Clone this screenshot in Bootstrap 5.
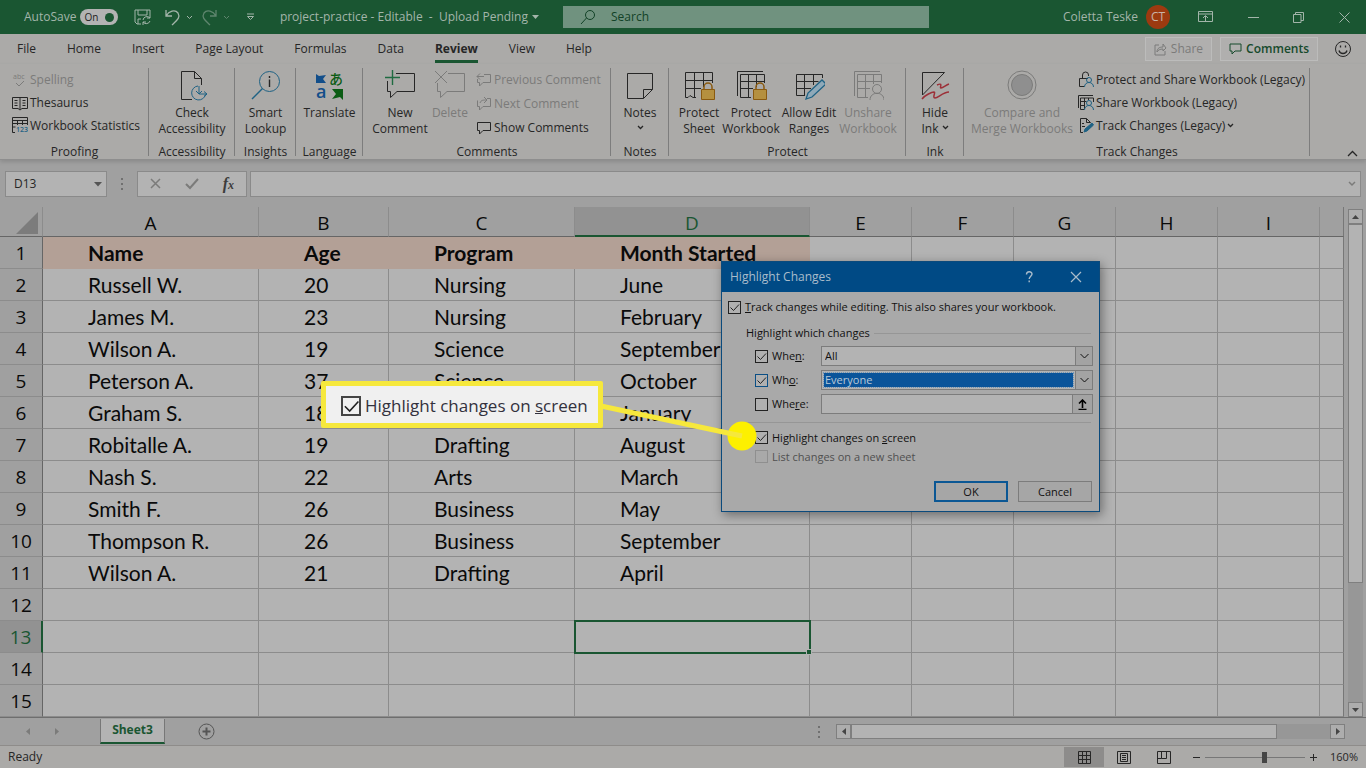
<!DOCTYPE html>
<html lang="en">
<head>
<meta charset="utf-8">
<meta name="viewport" content="width=device-width, initial-scale=1">
<title>project-practice - Excel</title>
<link href="https://cdn.jsdelivr.net/npm/bootstrap@5.3.0/dist/css/bootstrap.min.css" rel="stylesheet">
<style>
:root{--ink:#262626;--dim:#7b7b7a;--green:#1a5632;--ribbon:#abaaa8;--chrome:#a0a0a0;--paper:#b3b3b3;--line:#8c8c8c}
body{font-family:"Open Sans","Noto Sans",sans-serif;font-size:12px;line-height:16px;color:var(--ink);background:var(--chrome);min-height:100vh;overflow-x:hidden}
button,select,input{font:inherit;color:inherit}
button{border:0;background:none;padding:0}
svg{fill:none;flex:none;display:block}
svg:not([stroke]){stroke:currentColor}
.off{color:var(--dim)}
/* title bar */
.titlebar{height:34px;background:var(--green);color:#a3b5aa}
.title-left{flex:0 0 563px}
.title-right{flex:0 0 437px}
.autosave{width:38px;height:16px;border-radius:8px;background:#b3b3b3;color:#222;font-size:10px}
.autosave i{width:9px;height:9px;border-radius:50%;background:var(--green)}
.search{height:22px;background:#70927f;color:#124227}
.search input{border:0;background:none;outline:0;width:100%}
.search input::placeholder{color:#124227;opacity:1}
.avatar{width:24px;height:24px;background:#9c3a10;color:#c9b4a8}
.winbtns{width:192px}
/* menu tabs */
.menus{height:30px;background:var(--ribbon);padding:0 14px 0 17px}
.menus .tabs{gap:31px}
.menus a{color:var(--ink);text-decoration:none;line-height:22px;padding-top:3px;border-bottom:3px solid transparent}
.menus a.current{font-weight:700;border-color:var(--green)}
.pill{height:24px;border:1px solid #bcbcbb;background:#b0afae}
.pill.strong{color:#164a2c;font-weight:600}
/* ribbon */
.ribbon{height:96px;background:var(--ribbon);border-bottom:1px solid #8e8e8e;box-shadow:0 2px 4px #0002;position:relative}
.grp{position:relative;height:95px;padding-top:4px;flex:none}
.grp::after{content:"";position:absolute;right:0;top:4px;bottom:3px;border-right:1px solid #7d7d7d}
.grp .cap{height:16px}
.grp .tools{height:76px}
.big{display:flex;flex-direction:column;align-items:center;white-space:nowrap;flex:none;text-align:center;padding-top:1px}
.big svg{margin-bottom:4px}
.rowbtn{display:flex;align-items:center;gap:2px;height:23px;white-space:nowrap}
.tall .rowbtn{height:24px}
.indent9{padding-left:9px}.indent6{padding-left:6px}
.w52{width:52px}.w54{width:54px}.w56{width:56px}.w44{width:44px}.w64{width:64px}.w104{width:104px}
.g1{width:149px}.g2{width:86px}.g3{width:61px}.g4{width:67px}.g5{width:248px}.g6{width:58px}.g7{width:237px}.g8{width:346px}
/* formula bar */
.formula{height:47px;padding:11px 5px 10px}
.boxed{border:1px solid #8a8a8a;background:var(--paper);height:26px}
.namebox{width:102px}
.namebox input,.fxline input{border:0;background:none;outline:0;width:100%}
.fxline{margin-left:3px}
.fxbtns{width:110px}
.fx{font-family:"Liberation Serif",serif;font-size:16px;font-style:italic;font-weight:700;color:#3c3c3c}
.fx sub{font-size:12px;bottom:0}
/* sheet */
.cells{table-layout:fixed;border-collapse:separate;border-spacing:0;width:100%;font-family:Lato,"Open Sans",sans-serif;font-size:21px;line-height:24px;color:#0a0a0a}
.cells .c-num{width:43px}.cells .c-a{width:216px}.cells .c-b{width:130px}.cells .c-c{width:186px}.cells .c-d{width:235px}.cells .c-std{width:102px}
.cells td,.cells th{padding:0;height:32px;border-right:1px solid var(--line);border-bottom:1px solid var(--line);font-weight:400;white-space:nowrap}
.cells thead th{height:30px;background:var(--chrome);border-bottom-color:#666;text-align:center;padding-top:3px;font-family:"Open Sans",sans-serif;font-size:19px}
.cells tbody th{background:var(--chrome);text-align:center;border-right-color:#666;font-family:"Open Sans",sans-serif;font-size:19px}
.cells td{background:var(--paper);padding-left:45px}
.cells td:last-child,.cells th:last-child:not(:first-child){border-right-color:#777}
.cells .heads td:nth-child(-n+5){background:#b3a096;border-color:#b3a096;font-weight:700}
.cells thead th.on{background:#929292;color:var(--green);border-bottom:2px solid var(--green)}
.cells tbody th.on{background:#929292;color:var(--green);border-right:2px solid var(--green)}
.cells td.sel{position:relative;outline:2px solid var(--green);outline-offset:-1px}
.cells td.sel::after{content:"";position:absolute;right:-3px;bottom:-3px;width:6px;height:6px;background:var(--green);border:1px solid var(--paper);box-sizing:border-box}
.vbar{flex:0 0 22px;padding:2px 3px 0 4px}
.arrow{width:15px;height:15px;border:1px solid #7f7f7f;background:#adadad;display:flex;align-items:center;justify-content:center;flex:none}
.thumb{border:1px solid #7f7f7f;background:var(--paper)}
.trk{background:#979797}
/* bottom bars */
.sheetbar{height:28px;border-top:1px solid #6e6e6e}
.sheetbar .left{flex:0 0 836px}
.sheetbar .left .off{padding-left:26px;gap:24px;width:100px}
.sheetbar .trk .thumb{height:15px}
.sheetbar .arrow:last-child{margin-right:21px}
.sheettab{width:65px;height:25px;margin-right:33px;margin-top:-1px;background:#b3b3b3;border-bottom:2px solid var(--green);border-left:1px solid #777;border-right:1px solid #777;color:var(--green);font-weight:700;align-self:flex-start}
.status{height:23px;background:var(--ribbon);border-top:1px solid #8e8c8a}
.view{width:40px;height:20px;display:flex;align-items:center;justify-content:center}
.view.on{background:#8d8c8b}
.zoomer{appearance:none;width:100px;height:12px;background:linear-gradient(#777,#777) center/100% 1px no-repeat}
.zoomer::-webkit-slider-thumb{appearance:none;width:5px;height:11px;background:#454545}
.percent{font-size:11px;margin-left:12px}
/* dialog */
.dlg{position:absolute;left:721px;top:54px;width:379px;background:#a9a9a9;border:1px solid #0b4a7c;box-shadow:2px 3px 10px #0006;font-size:11px;color:#111}
.dlg header{height:30px;background:#004a85;color:#a9bccb;font-size:12px;padding:0 17px 0 8px}
.dlg .helpbtn{margin-right:36px}
.tick{appearance:none;width:13px;height:13px;border:1px solid #222;margin:0;flex:none;background:#b0b0b0 center/11px 11px no-repeat}
.tick:checked{background-image:url("data:image/svg+xml,%3Csvg xmlns='http://www.w3.org/2000/svg' viewBox='0 0 11 11'%3E%3Cpath d='M1.5 5.5l3 3 5.500-6' fill='none' stroke='%23222'/%3E%3C/svg%3E")}
.tick.hot{border-color:#0b4f85}
.tick:disabled{border-color:#8f8f8f;background-color:#a9a9a9}
.opt{display:flex;align-items:center;gap:4px}
.opt.first{height:30px;padding-left:6px}
.opt.short{height:19px;padding-left:1px}
.opt.short.faint{color:#505050}
.legendrow{height:22px}
.fields{padding:0 6px 0 9px}
.fieldrow{height:24px}
.fieldrow .opt{width:66px;flex:none}
.combo{height:20px;border:1px solid #7c7c7c;background:var(--paper);display:flex;flex:1;align-items:stretch}
.combo select,.combo input{appearance:none;border:0;background:none;flex:1;min-width:0;padding:0 3px;outline:0}
.combo .hotsel{background:#0a549a;color:#b9c9d8;margin:2px;padding:0 1px;line-height:14px;outline:1px dotted #6d94b8}
.combo .drop{width:17px;border-left:1px solid #7c7c7c;background:#a3a3a3;display:flex;align-items:center;justify-content:center}
.combo button.drop{width:20px}
.rule{border-top:1px solid #969696}
.rule.split{margin:6px 8px 5px 24px}
.dbtns{gap:10px;padding:15px 7px 9px 0}
.dbtn{width:74px;height:21px;border:1px solid #7c7c7c;background:#a6a6a6}
.dbtn.main{border:2px solid #0b5794}
/* callout */
.callout-box{position:absolute;left:321px;top:174px;width:282px;height:47px;border:5px solid #f6e83c;border-radius:2px;background:#f0f0f0;color:#33313d;font-size:17px;padding:2px 0 0 15px;white-space:nowrap}
.callout-box .tick{width:20px;height:20px;border:2px solid #444;background-color:#f0f0f0;background-size:17px 17px}
.pointer{position:absolute;left:596px;top:180px}
</style>
</head>
<body class="d-flex flex-column">

<header class="titlebar d-flex align-items-center">
  <div class="title-left d-flex align-items-center">
    <label for="autosave" class="ms-4 me-1">AutoSave</label>
    <button id="autosave" class="autosave d-flex align-items-center justify-content-between px-1"><span>On</span><i></i></button>
    <button class="ms-3" aria-label="Save"><svg width="18" height="18" viewBox="0 0 18 18"><path d="M7 16H3l-2-2V2h15v5M4 2v5h9V2M4 16v-5h3M9 12a4 4 0 0 1 7-2V7m0 3h-3M16 13a4 4 0 0 1-7 1v3m0-3h3"/></svg></button>
    <button class="ms-2 ps-1 d-flex align-items-center gap-1" aria-label="Undo"><svg width="18" height="18" viewBox="0 0 18 18"><path d="M2 2v6h6M2 8c3-5 9-7 12-3 3 5-2 8-6 12" stroke-width="1.300"/></svg><svg width="7" height="5" viewBox="0 0 7 5"><path d="M1 1l2.500 2.500L6 1"/></svg></button>
    <button class="ms-2 d-flex align-items-center gap-1 opacity-50" aria-label="Redo"><svg width="18" height="18" viewBox="0 0 18 18"><path d="M15 2v6H9M15 8C12 3 6 1 3 5c-3 5 2 8 6 12" stroke-width="1.300"/></svg><svg width="7" height="5" viewBox="0 0 7 5"><path d="M1 1l2.500 2.500L6 1"/></svg></button>
    <button class="ms-3" aria-label="Customize"><svg width="9" height="8" viewBox="0 0 9 8"><path d="M1 1h7M1.500 3.500l3 3 3-3z"/></svg></button>
    <button class="ms-auto me-4 d-flex align-items-center gap-1 text-nowrap"><span>project-practice - Editable &nbsp;-&nbsp; Upload Pending</span><svg width="7" height="4" viewBox="0 0 7 4"><path d="M0 0h7L3.500 4z" fill="currentColor" stroke="none"/></svg></button>
  </div>
  <div class="search flex-grow-1 d-flex align-items-center">
    <svg class="ms-3 me-2 pe-1" width="22" height="16" viewBox="0 0 18 16"><circle cx="11" cy="6" r="4.500"/><path d="M7.500 9L2 15"/></svg>
    <input aria-label="Search" placeholder="Search">
  </div>
  <div class="title-right d-flex align-items-center justify-content-end">
    <span>Coletta Teske</span>
    <span class="avatar rounded-circle d-flex align-items-center justify-content-center ms-2">CT</span>
    <div class="winbtns d-flex align-items-center justify-content-between ps-4 ms-1 pe-3">
      <button aria-label="Ribbon display"><svg width="15" height="12" viewBox="0 0 15 12"><path d="M.5.500h14v10H.500zM.5 3h14M7.500 10V5M5 7l2.500-2.500L10 7"/></svg></button>
      <button aria-label="Minimize"><svg width="11" height="11" viewBox="0 0 11 11"><path d="M0 5.500h11"/></svg></button>
      <button aria-label="Restore"><svg width="11" height="11" viewBox="0 0 11 11"><path d="M.5 2.500h7.500v8H.500zM2.500 2.500v-2h8v8H8"/></svg></button>
      <button aria-label="Close"><svg width="11" height="11" viewBox="0 0 11 11"><path d="M.5.500l10 10M10.500.500l-10 10"/></svg></button>
    </div>
  </div>
</header>

<nav class="menus d-flex align-items-center">
  <div class="tabs d-flex">
    <a href="#">File</a><a href="#">Home</a><a href="#">Insert</a><a href="#">Page Layout</a><a href="#">Formulas</a><a href="#">Data</a><a href="#" class="current">Review</a><a href="#">View</a><a href="#">Help</a>
  </div>
  <div class="ms-auto d-flex align-items-center gap-2">
    <button class="pill off d-flex align-items-center gap-1 px-2" disabled><svg width="13" height="13" viewBox="0 0 13 13"><path d="M5 2H1v10h10V8M3 9c0-4 3-5 6-5V1l3 4-3 3V6C6 6 4 7 3 9"/></svg>Share</button>
    <button class="pill strong d-flex align-items-center gap-1 px-2"><svg width="13" height="12" viewBox="0 0 13 12"><path d="M1 1h11v7H6l-3 3V8H1z"/></svg>Comments</button>
    <button class="ms-2" aria-label="Feedback"><svg width="18" height="18" viewBox="0 0 18 18"><circle cx="9" cy="9" r="7.500"/><path d="M5 10.500c1 4 7 4 8 0M6.500 5.500v2M11.500 5.500v2" stroke-width="1.300"/></svg></button>
  </div>
</nav>

<section class="ribbon d-flex">
  <div class="grp g1">
    <div class="tools ps-2 ms-1">
      <button class="rowbtn off" disabled><svg width="16" height="18" viewBox="0 0 16 18"><text x="1" y="8" font-size="7" fill="currentColor" stroke="none">abc</text><path d="M4 12l3 3 5-5"/></svg>Spelling</button>
      <button class="rowbtn"><svg width="16" height="16" viewBox="0 0 16 16"><path d="M8 2.500H.500v11H6l2 1.500 2-1.500h5.500v-11H8zV14M2.500 5.500h3M2.500 8h3M2.500 10.500h3M10.500 5.500h3M10.500 8h3M10.500 10.500h3"/></svg>Thesaurus</button>
      <button class="rowbtn"><svg width="16" height="18" viewBox="0 0 16 18"><path d="M3 15.500H.500V.500h15V8M.5 3.500h15M.5 6.500h15M.5 10h3M5.500 3.500V8M10.500 3.500V8"/><text x="4" y="15" font-size="7" font-weight="600" fill="#1f6284" stroke="none">123</text></svg>Workbook Statistics</button>
    </div><div class="cap text-center">Proofing</div>
  </div>
  <div class="grp g2">
    <div class="tools"><button class="big w-100"><svg width="32" height="32" viewBox="0 0 32 32"><path d="M16 30.500H5.500V2.500h13l7 7V16M18.500 2.500v7h7"/><path d="M22 17a7 7 0 1 0 7.500 8.500M23 17v8h8M28 22.500l3 2.500-3 2.500M20 22l3 3 3-3" stroke="#1f6284"/></svg><span>Check<br>Accessibility</span></button></div><div class="cap text-center">Accessibility</div>
  </div>
  <div class="grp g3">
    <div class="tools"><button class="big w-100"><svg width="32" height="32" viewBox="0 0 32 32"><path d="M12.500 19.500L2 30" stroke="#1f6284" stroke-width="1.500"/><circle cx="19.500" cy="12.500" r="10" stroke="#1f6284"/><path d="M19.500 10.500V18M19.500 7v2" stroke-width="1.400"/></svg><span>Smart<br>Lookup</span></button></div><div class="cap text-center">Insights</div>
  </div>
  <div class="grp g4">
    <div class="tools"><button class="big w-100"><svg width="32" height="32" viewBox="0 0 32 32" stroke="none"><path d="M2 5l3 2 7-1-3 4 3 4H2z" fill="#124e8a"/><path d="M18 20h11v11l-3-3-8 2 4-5z" fill="#0b5c14"/><text x="2" y="29" font-size="18" font-weight="600" fill="#124e8a">a</text><text x="15" y="15" font-size="14" font-weight="500" fill="#0b5c14" font-family="Noto Sans CJK JP, sans-serif">あ</text></svg><span>Translate</span></button></div><div class="cap text-center">Language</div>
  </div>
  <div class="grp g5">
    <div class="tools d-flex indent9">
      <button class="big w56"><svg width="32" height="32" viewBox="0 0 32 32"><path d="M12 4.500h18.500v18H13l-6.500 6v-6h-3V12"/><path d="M8.500 1v15M1 8.500h15" stroke="#1f6b41" stroke-width="1.400"/></svg><span>New<br>Comment</span></button>
      <button class="big off w44" disabled><svg width="32" height="32" viewBox="0 0 32 32"><path d="M14 4.500h16.500v18H13l-6.500 6v-6h-3V14M1 2l12 12M13 2L1 14"/></svg>Delete</button>
      <div class="tall ms-1">
        <button class="rowbtn off" disabled><svg width="16" height="16" viewBox="0 0 16 16"><path d="M8 2.500h6.500v8H7L3.500 14v-3.500H1.500V7M1 4.500h7M4 1.500l-3 3 3 3"/></svg>Previous Comment</button>
        <button class="rowbtn off" disabled><svg width="16" height="16" viewBox="0 0 16 16"><path d="M11 2.500h3.500v8H7L3.500 14v-3.500H1.500v-6M4 7c1-3 3-3 7-3M8 1l3 3-3 3"/></svg>Next Comment</button>
        <button class="rowbtn"><svg width="16" height="16" viewBox="0 0 16 16"><path d="M1.500 2.500h13v8H7L3.500 14v-3.500h-2z"/></svg>Show Comments</button>
      </div>
    </div><div class="cap text-center">Comments</div>
  </div>
  <div class="grp g6">
    <div class="tools"><button class="big w-100"><svg width="32" height="32" viewBox="0 0 32 32"><path d="M3.500 4.500h25v16l-9 9h-16zM19.500 29.500v-9h9"/></svg><span>Notes</span><svg class="mt-1" width="7" height="5" viewBox="0 0 7 5"><path d="M1 1l2.500 2.500L6 1" stroke-width="1.300"/></svg></button></div><div class="cap text-center">Notes</div>
  </div>
  <div class="grp g7">
    <div class="tools d-flex ps-1">
      <button class="big w52"><svg width="32" height="32" viewBox="0 0 32 32"><path d="M13 28.500H10l-3-2-2 2H2.500v-25h27V14M2.500 11.500h27M2.500 19.500H18M11.500 3.500v25M20.500 3.500V18"/><path d="M21 20v-2a4 4 0 0 1 8 0v2" stroke="#8a5a10" stroke-width="1.500"/><path d="M18.500 20.500h13v10h-13z" fill="#b5903f" stroke="#8a5a10"/></svg><span>Protect<br>Sheet</span></button>
      <button class="big w52"><svg width="32" height="32" viewBox="0 0 32 32"><path d="M2.500 27V2.500H28M16 28.500H5.500v-23h24V14M5.500 12.500h24M5.500 19.500H18M13.500 5.500v23M21.500 5.500V18"/><path d="M21 20v-2a4 4 0 0 1 8 0v2" stroke="#8a5a10" stroke-width="1.500"/><path d="M18.500 20.500h13v10h-13z" fill="#b5903f" stroke="#8a5a10"/></svg><span>Protect<br>Workbook</span></button>
      <button class="big w64"><svg width="32" height="32" viewBox="0 0 32 32"><path d="M12 26.500H3.500v-21h26V9M3.500 12.500h22M3.500 19.500H18M11.500 5.500v21M20.500 5.500V16"/><path d="M13 30l2-6 14-13 4 4-14 13z" fill="#8fa9b8" stroke="#1f6284" stroke-width="1.300"/></svg><span>Allow Edit<br>Ranges</span></button>
      <button class="big off w54" disabled><svg width="32" height="32" viewBox="0 0 32 32"><path d="M2.500 27V2.500H28M16 28.500H5.500v-23h24V14M5.500 12.500h24M5.500 19.500H18M13.500 5.500v23M21.500 5.500V15"/><circle cx="25" cy="20" r="4.500"/><path d="M18 31c0-9 14-9 14 0"/></svg><span>Unshare<br>Workbook</span></button>
    </div><div class="cap text-center">Protect</div>
  </div>
  <div class="grp g6">
    <div class="tools"><button class="big w-100"><svg width="32" height="32" viewBox="0 0 32 32"><path d="M3.500 26V3.500h22z"/><path d="M3 30c3-4 10-7 12-7s-2 6 1 6 8-6 14-6M18 16c7-3 2 3 4 3s5-3 8-4" stroke="#9c3038" stroke-width="1.500"/></svg><span>Hide<br>Ink <svg class="d-inline" width="7" height="5" viewBox="0 0 7 5"><path d="M1 1l2.500 2.500L6 1" stroke-width="1.300"/></svg></span></button></div><div class="cap text-center">Ink</div>
  </div>
  <div class="grp g8">
    <div class="tools d-flex indent6">
      <button class="big off w104" disabled><svg width="32" height="32" viewBox="0 0 32 32"><circle cx="16" cy="16" r="14"/><circle cx="16" cy="16" r="10.500" fill="#8f8f8f"/></svg><span>Compare and<br>Merge Workbooks</span></button>
      <div class="ms-1">
        <button class="rowbtn"><svg width="16" height="17" viewBox="0 0 16 17"><path d="M6 15.500H1.500v-8H10M4.500 7.500V4a3 3 0 0 1 6 0v1"/><circle cx="11" cy="9" r="2.500" stroke="#1f6284"/><path d="M6.500 16c0-6 9-6 9 0" stroke="#1f6284"/></svg>Protect and Share Workbook (Legacy)</button>
        <button class="rowbtn"><svg width="16" height="17" viewBox="0 0 16 17"><path d="M.5 14V1.500H15M6 15.500H2.500V4h13v4M2.500 7.500h6M2.500 11.500h4M6.500 4v11M10.500 4v2"/><circle cx="11" cy="9" r="2.500" stroke="#1f6284"/><path d="M6.500 16c0-6 9-6 9 0" stroke="#1f6284"/></svg>Share Workbook (Legacy)</button>
        <button class="rowbtn"><svg width="16" height="17" viewBox="0 0 16 17"><path d="M5 15.500H2.500V1.500h6l4 4M8.500 1.500v4h4M4 6.500h2M4 9.500h3"/><path d="M6 15l1-3 7-6 1.500 2L9 14z" stroke="#1f6284" fill="#1f6284"/></svg>Track Changes (Legacy)<svg width="7" height="5" viewBox="0 0 7 5"><path d="M1 1l2.500 2.500L6 1" stroke-width="1.300"/></svg></button>
      </div>
    </div><div class="cap text-center">Track Changes</div>
  </div>
  <button class="ms-auto me-2 align-self-end" aria-label="Collapse ribbon"><svg width="11" height="9" viewBox="0 0 11 9"><path d="M1 6l4.500-4.500L10 6" stroke-width="1.300"/></svg></button>
</section>

<section class="formula d-flex align-items-center">
  <div class="boxed namebox d-flex align-items-center px-1"><input class="ps-1" aria-label="Name box" value="D13"><svg width="8" height="5" viewBox="0 0 8 5"><path d="M0 0h8L4 4.500z" fill="#555" stroke="none"/></svg></div>
  <svg class="mx-1" width="22" height="12" viewBox="0 0 22 12" stroke="#707070"><path d="M11 0v12" stroke-width="2" stroke-dasharray="2 3"/></svg>
  <div class="boxed fxbtns d-flex align-items-center justify-content-between px-2">
    <button class="off ms-1" aria-label="Cancel entry"><svg width="12" height="12" viewBox="0 0 12 12"><path d="M1 1l9 9M10 1l-9 9" stroke-width="1.500"/></svg></button>
    <button class="off" aria-label="Enter"><svg width="14" height="12" viewBox="0 0 14 12"><path d="M1 6l4 4 8-9" stroke-width="2"/></svg></button>
    <button class="fx me-1" aria-label="Insert function">f<sub>x</sub></button>
  </div>
  <div class="boxed fxline flex-grow-1 d-flex align-items-center px-1"><input aria-label="Formula"><svg width="8" height="6" viewBox="0 0 8 6" class="off"><path d="M1 1l3 3 3-3" stroke-width="1.500"/></svg></div>
</section>

<main class="position-relative d-flex">
  <div class="flex-grow-1">
  <table class="cells">
    <colgroup><col class="c-num"><col class="c-a"><col class="c-b"><col class="c-c"><col class="c-d"><col class="c-std"><col class="c-std"><col class="c-std"><col class="c-std"><col class="c-std"><col></colgroup>
    <thead><tr><th><svg class="ms-auto me-1" width="22" height="22" viewBox="0 0 22 22"><path d="M22 0v22H0z" fill="#7c7c7c" stroke="none"/></svg></th><th>A</th><th>B</th><th>C</th><th class="on">D</th><th>E</th><th>F</th><th>G</th><th>H</th><th>I</th><th></th></tr></thead>
    <tbody>
    <tr class="heads"><th>1</th><td>Name</td><td>Age</td><td>Program</td><td>Month Started</td><td></td><td></td><td></td><td></td><td></td><td></td></tr>
    <tr><th>2</th><td>Russell W.</td><td>20</td><td>Nursing</td><td>June</td><td></td><td></td><td></td><td></td><td></td><td></td></tr>
    <tr><th>3</th><td>James M.</td><td>23</td><td>Nursing</td><td>February</td><td></td><td></td><td></td><td></td><td></td><td></td></tr>
    <tr><th>4</th><td>Wilson A.</td><td>19</td><td>Science</td><td>September</td><td></td><td></td><td></td><td></td><td></td><td></td></tr>
    <tr><th>5</th><td>Peterson A.</td><td>37</td><td>Science</td><td>October</td><td></td><td></td><td></td><td></td><td></td><td></td></tr>
    <tr><th>6</th><td>Graham S.</td><td>18</td><td></td><td>January</td><td></td><td></td><td></td><td></td><td></td><td></td></tr>
    <tr><th>7</th><td>Robitalle A.</td><td>19</td><td>Drafting</td><td>August</td><td></td><td></td><td></td><td></td><td></td><td></td></tr>
    <tr><th>8</th><td>Nash S.</td><td>22</td><td>Arts</td><td>March</td><td></td><td></td><td></td><td></td><td></td><td></td></tr>
    <tr><th>9</th><td>Smith F.</td><td>26</td><td>Business</td><td>May</td><td></td><td></td><td></td><td></td><td></td><td></td></tr>
    <tr><th>10</th><td>Thompson R.</td><td>26</td><td>Business</td><td>September</td><td></td><td></td><td></td><td></td><td></td><td></td></tr>
    <tr><th>11</th><td>Wilson A.</td><td>21</td><td>Drafting</td><td>April</td><td></td><td></td><td></td><td></td><td></td><td></td></tr>
    <tr><th>12</th><td></td><td></td><td></td><td></td><td></td><td></td><td></td><td></td><td></td><td></td></tr>
    <tr><th class="on">13</th><td></td><td></td><td></td><td class="sel"></td><td></td><td></td><td></td><td></td><td></td><td></td></tr>
    <tr><th>14</th><td></td><td></td><td></td><td></td><td></td><td></td><td></td><td></td><td></td><td></td></tr>
    <tr><th>15</th><td></td><td></td><td></td><td></td><td></td><td></td><td></td><td></td><td></td><td></td></tr>
    </tbody>
  </table>
  </div>
  <div class="vbar d-flex flex-column">
    <button class="arrow" aria-label="Scroll up"><svg width="7" height="4" viewBox="0 0 7 4"><path d="M0 4h7L3.500 0z" fill="#444" stroke="none"/></svg></button>
    <div class="trk flex-grow-1"><div class="thumb h-75"></div></div>
    <button class="arrow" aria-label="Scroll down"><svg width="7" height="4" viewBox="0 0 7 4"><path d="M0 0h7L3.500 4z" fill="#444" stroke="none"/></svg></button>
  </div>

  <form class="dlg" aria-label="Highlight Changes">
    <header class="d-flex align-items-center"><span class="me-auto">Highlight Changes</span><button type="button" class="helpbtn" aria-label="Help"><svg width="9" height="12" viewBox="0 0 9 12"><path d="M1.500 3.500c0-3.500 5.500-3.500 5.500-.5 0 2-2.800 2.500-2.800 5M4.200 9.500v1.700" stroke-width="1.400"/></svg></button><button type="button" aria-label="Close"><svg width="12" height="12" viewBox="0 0 12 12"><path d="M1 1l10 10M11 1L1 11" stroke-width="1.200"/></svg></button></header>
    <label class="opt first"><input type="checkbox" class="tick" checked><span><u>T</u>rack changes while editing. This also shares your workbook.</span></label>
    <div class="legendrow d-flex align-items-center gap-1 ps-4 pe-2"><span>Highlight which changes</span><span class="rule flex-grow-1"></span></div>
    <div class="fields ms-4">
      <div class="fieldrow d-flex align-items-center"><label class="opt"><input type="checkbox" class="tick" checked><span>Whe<u>n</u>:</span></label><div class="combo"><select aria-label="When value"><option>All</option></select><span class="drop"><svg width="9" height="6" viewBox="0 0 9 6"><path d="M.5 1l4 4 4-4"/></svg></span></div></div>
      <div class="fieldrow d-flex align-items-center"><label class="opt"><input type="checkbox" class="tick hot" checked><span>Wh<u>o</u>:</span></label><div class="combo"><select class="hotsel" aria-label="Who value"><option>Everyone</option></select><span class="drop"><svg width="9" height="6" viewBox="0 0 9 6"><path d="M.5 1l4 4 4-4"/></svg></span></div></div>
      <div class="fieldrow d-flex align-items-center"><label class="opt"><input type="checkbox" class="tick"><span>Whe<u>r</u>e:</span></label><div class="combo"><input aria-label="Where value"><button type="button" class="drop" aria-label="Pick range"><svg width="9" height="11" viewBox="0 0 9 11"><path d="M4.500 9V1M1 4.500L4.500 1 8 4.500M.5 10.500h8" stroke-width="1.600" stroke="#000"/></svg></button></div></div>
    </div>
    <div class="rule split"></div>
    <div class="ms-4 ps-2">
      <label class="opt short"><input type="checkbox" class="tick" checked><span>Highlight changes on <u>s</u>creen</span></label>
      <label class="opt short faint"><input type="checkbox" class="tick" disabled><span>List changes on a new sheet</span></label>
    </div>
    <div class="dbtns d-flex justify-content-end"><button type="button" class="dbtn main">OK</button><button type="button" class="dbtn">Cancel</button></div>
  </form>

  <label class="callout-box d-flex align-items-center gap-1"><input type="checkbox" class="tick" checked><span>Highlight changes on <u>s</u>creen</span></label>
  <svg class="pointer" width="162" height="66" viewBox="0 0 162 66"><circle cx="146" cy="49" r="14.500" fill="#fdf000" stroke="none"/><path d="M5 19L146 49" stroke="#f6e83c" stroke-width="5"/></svg>
</main>

<footer>
  <div class="sheetbar d-flex align-items-center">
    <div class="left d-flex align-items-center">
      <span class="d-flex off"><svg width="5" height="7" viewBox="0 0 5 7"><path d="M4 0v7L0 3.500z" fill="currentColor" stroke="none"/></svg><svg width="5" height="7" viewBox="0 0 5 7"><path d="M0 0v7l4-3.500z" fill="currentColor" stroke="none"/></svg></span>
      <button class="sheettab">Sheet3</button>
      <button aria-label="New sheet"><svg width="17" height="17" viewBox="0 0 17 17" stroke="#555"><circle cx="8.500" cy="8.500" r="7.500"/><path d="M4.500 8.500h8M8.500 4.500v8" stroke-width="2"/></svg></button>
      <svg class="ms-auto me-3" width="2" height="12" viewBox="0 0 2 12" stroke="#707070"><path d="M1 0v12" stroke-width="2" stroke-dasharray="2 3"/></svg>
    </div>
    <button class="arrow" aria-label="Scroll left"><svg width="4" height="7" viewBox="0 0 4 7"><path d="M4 0v7L0 3.500z" fill="#444" stroke="none"/></svg></button>
    <div class="trk flex-grow-1"><div class="thumb" style="width:89%"></div></div>
    <button class="arrow" aria-label="Scroll right"><svg width="4" height="7" viewBox="0 0 4 7"><path d="M0 0v7l4-3.500z" fill="#444" stroke="none"/></svg></button>
  </div>
  <div class="status d-flex align-items-center px-2">
    <span class="me-auto">Ready</span>
    <button class="view on" aria-label="Normal"><svg width="13" height="13" viewBox="0 0 13 13"><path d="M.5.500h12v12H.500zM4.500.500v12M8.500.500v12M.5 4.500h12M.5 8.500h12"/></svg></button>
    <button class="view" aria-label="Page layout"><svg width="14" height="13" viewBox="0 0 14 13"><path d="M.5.500h13v12H.500zM3.500 2.500h7v8h-7zM5 4.500h4M5 6.500h4M5 8.500h4"/></svg></button>
    <button class="view" aria-label="Page break"><svg width="14" height="13" viewBox="0 0 14 13"><path d="M.5.500h13v12H.500zM4.500.500v7h5v-7M.5 7.500h4"/></svg></button>
    <button class="ms-2" aria-label="Zoom out"><svg width="9" height="9" viewBox="0 0 9 9"><path d="M1 4.500h7"/></svg></button>
    <input type="range" class="zoomer mx-1" min="0" max="100" value="60" aria-label="Zoom">
    <button aria-label="Zoom in"><svg width="9" height="9" viewBox="0 0 9 9"><path d="M1 4.500h7M4.500 1v7"/></svg></button>
    <span class="percent">160%</span>
  </div>
</footer>
<script src="https://cdn.jsdelivr.net/npm/bootstrap@5.3.0/dist/js/bootstrap.bundle.min.js"></script>
</body>
</html>
